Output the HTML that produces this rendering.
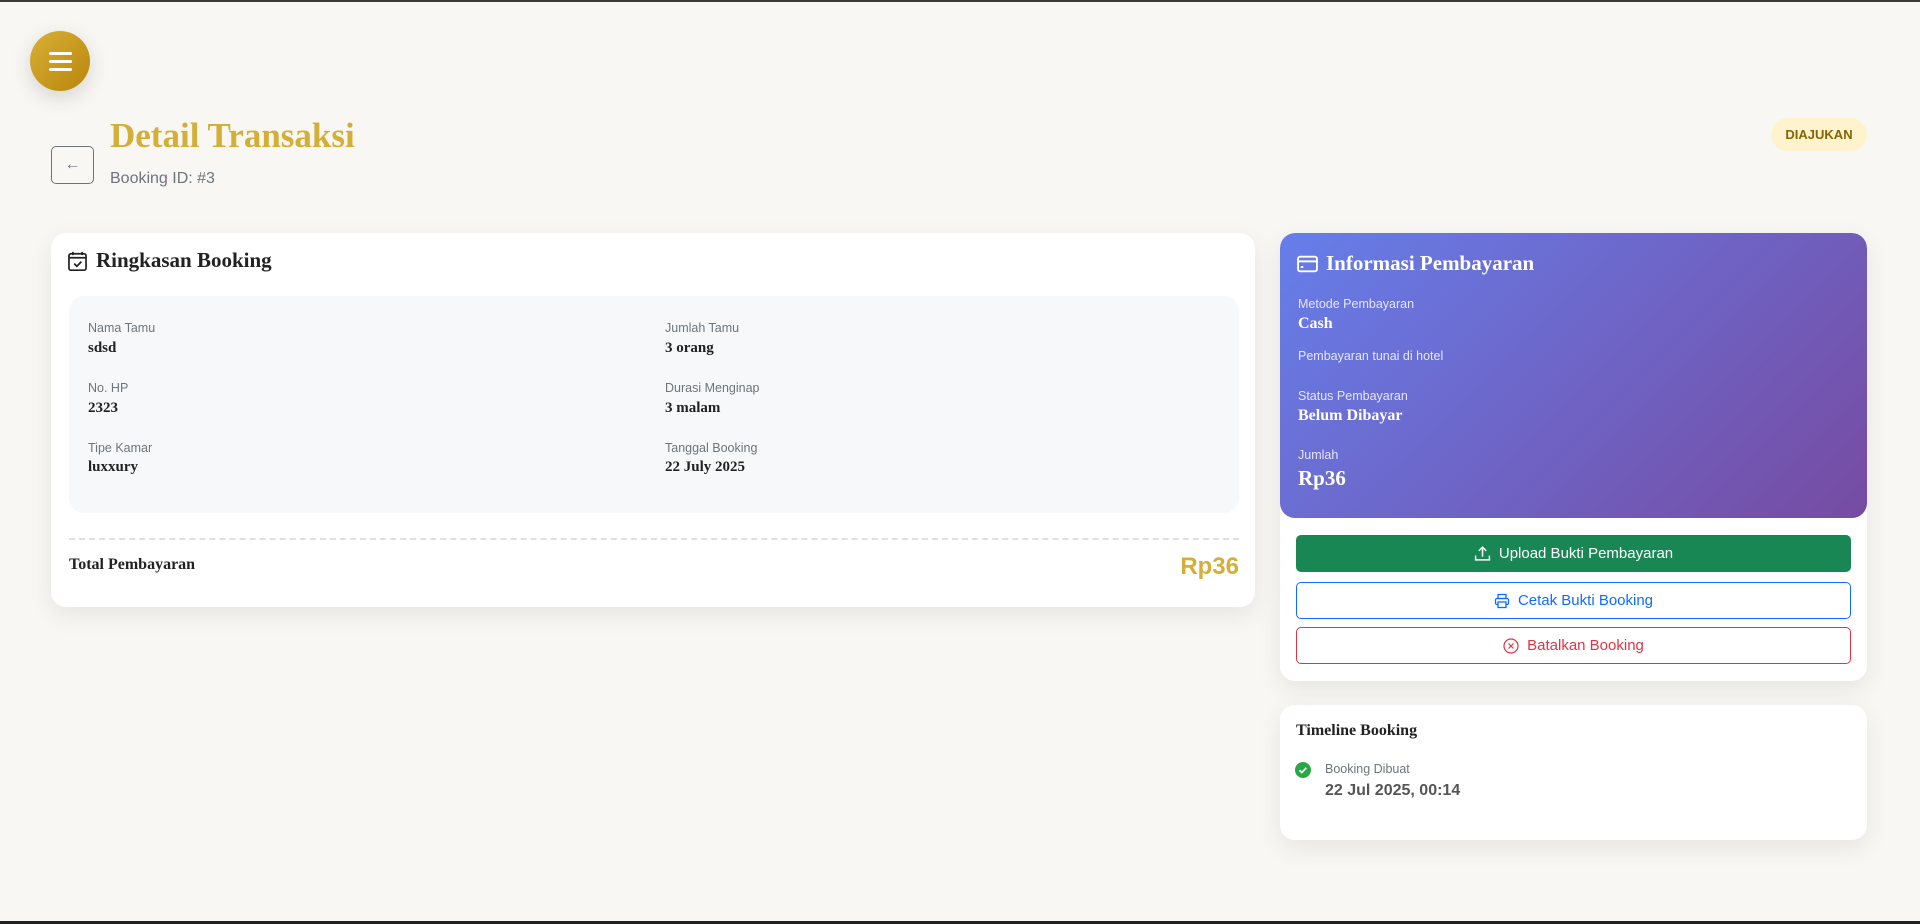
<!DOCTYPE html>
<html><head><meta charset="utf-8"><style>
*{box-sizing:border-box;margin:0;padding:0}
body{width:1920px;height:924px;overflow:hidden;background:#f8f7f3;font-family:"Liberation Sans",sans-serif;position:relative}
.abs{position:absolute}
.serif{font-family:"Liberation Serif","DejaVu Serif",serif;font-weight:bold}
.ham{left:30px;top:31px;width:60px;height:60px;border-radius:50%;background:linear-gradient(135deg,#d8b035,#b8860b);box-shadow:0 6px 20px rgba(0,0,0,.15)}
.ham i{position:absolute;left:19px;width:23px;height:3px;background:#fff;border-radius:2px}
.back{left:51px;top:146px;width:43px;height:38px;border:1px solid #6c757d;border-radius:5px;color:#6c757d;font-size:16px;text-align:center;line-height:35px}
.card{background:#fff;border-radius:15px;box-shadow:0 8px 25px rgba(0,0,0,.08)}
.lbl{font-size:12.5px;color:#6c757d}
.val{font-size:15px;color:#222}
.btn{left:1296px;width:555px;border-radius:5px;font-size:15px;text-align:center;display:flex;align-items:center;justify-content:center;gap:8px}
</style></head><body>
<div class="abs" style="left:0;top:0;width:1920px;height:2px;background:#3a3a3a"></div>
<div class="abs" style="left:0;top:921px;width:1920px;height:3px;background:#222"></div>
<div class="abs ham"><i style="top:21px"></i><i style="top:29px"></i><i style="top:37px"></i></div>
<div class="abs back">&#8592;</div>
<div class="abs serif" style="left:110px;top:116px;font-size:35px;color:#d4af37">Detail Transaksi</div>
<div class="abs" style="left:110px;top:170px;font-size:16px;color:#6c757d">Booking ID: #3</div>
<div class="abs" style="left:1771px;top:118px;width:96px;height:33px;border-radius:17px;background:#fff3cd;color:#856404;font-size:13px;font-weight:bold;text-align:center;line-height:33px">DIAJUKAN</div>

<div class="abs card" style="left:51px;top:233px;width:1204px;height:374px"></div>
<svg class="abs" style="left:67px;top:250px" width="21" height="22" viewBox="0 0 16 16" fill="none" stroke="#222" stroke-width="1.3"><rect x="1.5" y="2.5" width="13" height="12.5" rx="1.5"/><path d="M1.5 5.5h13M4.5 1v2.5M11.5 1v2.5M5.5 10l2 2 3.5-3.5"/></svg>
<div class="abs serif" style="left:96px;top:248px;font-size:21px;color:#222">Ringkasan Booking</div>
<div class="abs" style="left:69px;top:296px;width:1170px;height:217px;background:#f7f8fa;border-radius:15px"></div>
<div class="abs lbl" style="left:88px;top:321px">Nama Tamu</div><div class="abs val serif" style="left:88px;top:340px">sdsd</div>
<div class="abs lbl" style="left:88px;top:381px">No. HP</div><div class="abs val serif" style="left:88px;top:400px">2323</div>
<div class="abs lbl" style="left:88px;top:441px">Tipe Kamar</div><div class="abs val serif" style="left:88px;top:459px">luxxury</div>
<div class="abs lbl" style="left:665px;top:321px">Jumlah Tamu</div><div class="abs val serif" style="left:665px;top:340px">3 orang</div>
<div class="abs lbl" style="left:665px;top:381px">Durasi Menginap</div><div class="abs val serif" style="left:665px;top:400px">3 malam</div>
<div class="abs lbl" style="left:665px;top:441px">Tanggal Booking</div><div class="abs val serif" style="left:665px;top:459px">22 July 2025</div>
<div class="abs" style="left:69px;top:538px;width:1170px;border-top:2px dashed #dde0e4"></div>
<div class="abs serif" style="left:69px;top:556px;font-size:16px;color:#222">Total Pembayaran</div>
<div class="abs" style="right:681px;top:553px;font-size:24px;font-weight:bold;color:#d4af37">Rp36</div>

<div class="abs card" style="left:1280px;top:233px;width:587px;height:448px;overflow:hidden">
<div style="height:285px;background:linear-gradient(135deg,#667eea,#764ba2);border-radius:15px"></div></div>
<svg class="abs" style="left:1297px;top:255px" width="21" height="18" viewBox="0 0 20 16" fill="none" stroke="#fff" stroke-width="1.8"><rect x="1" y="1" width="18" height="14" rx="2"/><path d="M1 5.5h18"/><rect x="3.5" y="10" width="2.5" height="1.8" fill="#fff" stroke="none"/></svg>
<div class="abs serif" style="left:1326px;top:251px;font-size:21px;color:#fff">Informasi Pembayaran</div>
<div class="abs" style="left:1298px;top:297px;font-size:12.5px;color:#e4e6ff">Metode Pembayaran</div>
<div class="abs serif" style="left:1298px;top:315px;font-size:16px;color:#fff">Cash</div>
<div class="abs" style="left:1298px;top:349px;font-size:12.5px;color:#e4e6ff">Pembayaran tunai di hotel</div>
<div class="abs" style="left:1298px;top:389px;font-size:12.5px;color:#e4e6ff">Status Pembayaran</div>
<div class="abs serif" style="left:1298px;top:407px;font-size:16px;color:#fff">Belum Dibayar</div>
<div class="abs" style="left:1298px;top:448px;font-size:12.5px;color:#e4e6ff">Jumlah</div>
<div class="abs serif" style="left:1298px;top:466px;font-size:21px;color:#fff">Rp36</div>

<div class="abs btn" style="top:535px;height:37px;background:#198754;color:#fff"><svg width="17" height="17" viewBox="0 0 16 16" fill="none" stroke="#fff" stroke-width="1.4"><path d="M1.5 10v4h13v-4M8 11V2M4.5 5.5 8 2l3.5 3.5"/></svg>Upload Bukti Pembayaran</div>
<div class="abs btn" style="top:582px;height:37px;border:1px solid #0d6efd;color:#0d6efd;background:#fff"><svg width="16" height="16" viewBox="0 0 16 16" fill="none" stroke="#0d6efd" stroke-width="1.3"><rect x="4" y="1.5" width="8" height="4"/><rect x="1.5" y="5.5" width="13" height="6" rx="1.5"/><rect x="4" y="9" width="8" height="5.5" fill="#fff"/></svg>Cetak Bukti Booking</div>
<div class="abs btn" style="top:627px;height:37px;border:1px solid #dc3545;color:#dc3545;background:#fff"><svg width="16" height="16" viewBox="0 0 16 16" fill="none" stroke="#dc3545" stroke-width="1.2"><circle cx="8" cy="8" r="7"/><path d="M5.5 5.5l5 5M10.5 5.5l-5 5"/></svg>Batalkan Booking</div>

<div class="abs card" style="left:1280px;top:705px;width:587px;height:135px"></div>
<div class="abs serif" style="left:1296px;top:722px;font-size:16px;color:#222">Timeline Booking</div>
<svg class="abs" style="left:1295px;top:762px" width="16" height="16" viewBox="0 0 16 16"><circle cx="8" cy="8" r="8" fill="#28a745"/><path d="M4.5 8.2l2.3 2.3 4.5-4.6" fill="none" stroke="#fff" stroke-width="1.8"/></svg>
<div class="abs" style="left:1325px;top:762px;font-size:12.5px;color:#6c757d">Booking Dibuat</div>
<div class="abs" style="left:1325px;top:782px;font-size:16px;font-weight:bold;color:#555">22 Jul 2025, 00:14</div>
</body></html>
